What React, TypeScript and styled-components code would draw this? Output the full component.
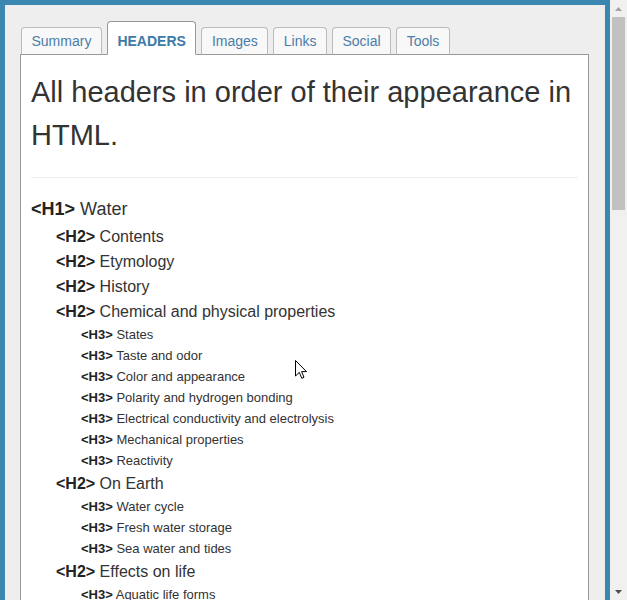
import styled, { createGlobalStyle } from 'styled-components'

const GlobalStyle = createGlobalStyle`
  html, body {
    margin: 0;
    padding: 0;
    overflow: hidden;
    background: #ffffff;
  }
  body {
    font-family: 'Liberation Sans', Arial, sans-serif;
    color: #333333;
  }
`

const Page = styled.div`
  display: flex;
  height: 600px;
  position: relative;
`

const Frame = styled.div`
  width: 610px;
  height: 640px;
  box-sizing: border-box;
  border: 5px solid #3b87b1;
  background: #eeeeee;
  padding: 16px 16px 0 15px;
  display: flex;
  flex-direction: column;
`

const TabBar = styled.div`
  display: flex;
  align-items: flex-end;
  gap: 5px;
  padding-left: 1px;
  margin-bottom: -1px;
  position: relative;
  z-index: 1;
`

const Tab = styled.div<{ $active?: boolean }>`
  height: ${({ $active }) => ($active ? '34px' : '28px')};
  box-sizing: border-box;
  padding: ${({ $active }) => ($active ? '6px 9.5px 0' : '0 9.5px')};
  line-height: 26px;
  font-size: 14px;
  font-weight: ${({ $active }) => ($active ? 700 : 400)};
  text-transform: ${({ $active }) => ($active ? 'uppercase' : 'none')};
  color: ${({ $active }) => ($active ? '#3d7aa8' : '#4a7ea8')};
  background: ${({ $active }) => ($active ? '#ffffff' : '#f8f8f8')};
  border: 1px solid ${({ $active }) => ($active ? '#999999' : '#bbbbbb')};
  border-bottom-color: ${({ $active }) => ($active ? '#ffffff' : '#999999')};
  border-radius: 4px 4px 0 0;
  cursor: pointer;
`

const Panel = styled.div`
  flex: 1;
  background: #ffffff;
  border: 1px solid #999999;
  border-bottom: none;
  padding: 16px 10px 0;
`

const Title = styled.h1`
  margin: 0;
  font-size: 29px;
  line-height: 43px;
  font-weight: 400;
  color: #333333;
`

const Divider = styled.hr`
  margin: 20px 0 17px;
  border: 0;
  border-top: 1px solid #eeeeee;
`

const HeaderList = styled.ul`
  list-style: none;
  margin: 0;
  padding: 0;
`

const sizes: Record<number, { font: number; line: number }> = {
  1: { font: 18, line: 29 },
  2: { font: 16, line: 25 },
  3: { font: 13, line: 21 }
}

const HeaderItem = styled.li<{ $level: number }>`
  padding-left: ${({ $level }) => ($level - 1) * 25}px;
  font-size: ${({ $level }) => sizes[$level].font}px;
  line-height: ${({ $level }) => sizes[$level].line}px;
  color: #333333;
  white-space: nowrap;
`

const Tag = styled.b`
  font-weight: 700;
  color: #222222;
`

const Scrollbar = styled.div`
  width: 17px;
  background: #f0f0f0;
  display: flex;
  flex-direction: column;
`

const ScrollButton = styled.div`
  height: 17px;
  display: flex;
  align-items: center;
  justify-content: center;
`

const ScrollTrack = styled.div`
  flex: 1;
  display: flex;
  flex-direction: column;
`

const Thumb = styled.div`
  height: 193px;
  margin: 0 2px;
  background: #c1c1c1;
`

const Cursor = styled.svg`
  position: absolute;
  left: 295px;
  top: 360px;
  pointer-events: none;
`

const tabs = ['Summary', 'Headers', 'Images', 'Links', 'Social', 'Tools']

const headers: [number, string][] = [
  [1, 'Water'],
  [2, 'Contents'],
  [2, 'Etymology'],
  [2, 'History'],
  [2, 'Chemical and physical properties'],
  [3, 'States'],
  [3, 'Taste and odor'],
  [3, 'Color and appearance'],
  [3, 'Polarity and hydrogen bonding'],
  [3, 'Electrical conductivity and electrolysis'],
  [3, 'Mechanical properties'],
  [3, 'Reactivity'],
  [2, 'On Earth'],
  [3, 'Water cycle'],
  [3, 'Fresh water storage'],
  [3, 'Sea water and tides'],
  [2, 'Effects on life'],
  [3, 'Aquatic life forms'],
  [2, 'Effects on human civilization'],
  [3, 'Health and pollution']
]

const App = () => {
  return (
    <>
      <GlobalStyle />
      <Page>
        <Frame>
          <TabBar>
            {tabs.map((t) => (
              <Tab key={t} $active={t === 'Headers'}>
                {t}
              </Tab>
            ))}
          </TabBar>
          <Panel>
            <Title>All headers in order of their appearance in HTML.</Title>
            <Divider />
            <HeaderList>
              {headers.map(([level, text], i) => (
                <HeaderItem key={i} $level={level}>
                  <Tag>&lt;H{level}&gt;</Tag> {text}
                </HeaderItem>
              ))}
            </HeaderList>
          </Panel>
        </Frame>
        <Scrollbar>
          <ScrollButton>
            <svg width="7" height="4" viewBox="0 0 7 4">
              <path d="M3.5 0 L7 4 L0 4 Z" fill="#a3a3a3" />
            </svg>
          </ScrollButton>
          <ScrollTrack>
            <Thumb />
          </ScrollTrack>
          <ScrollButton>
            <svg width="7" height="4" viewBox="0 0 7 4">
              <path d="M0 0 L7 0 L3.5 4 Z" fill="#505050" />
            </svg>
          </ScrollButton>
        </Scrollbar>
        <Cursor width="12" height="19" viewBox="0 0 12 19">
          <path
            d="M0.5 0.5 L0.5 16 L4.3 12.4 L6.8 18.3 L9 17.3 L6.6 11.6 L11.5 11.6 Z"
            fill="#ffffff"
            stroke="#000000"
            strokeWidth="1"
            strokeLinejoin="miter"
          />
        </Cursor>
      </Page>
    </>
  )
}

export default App
